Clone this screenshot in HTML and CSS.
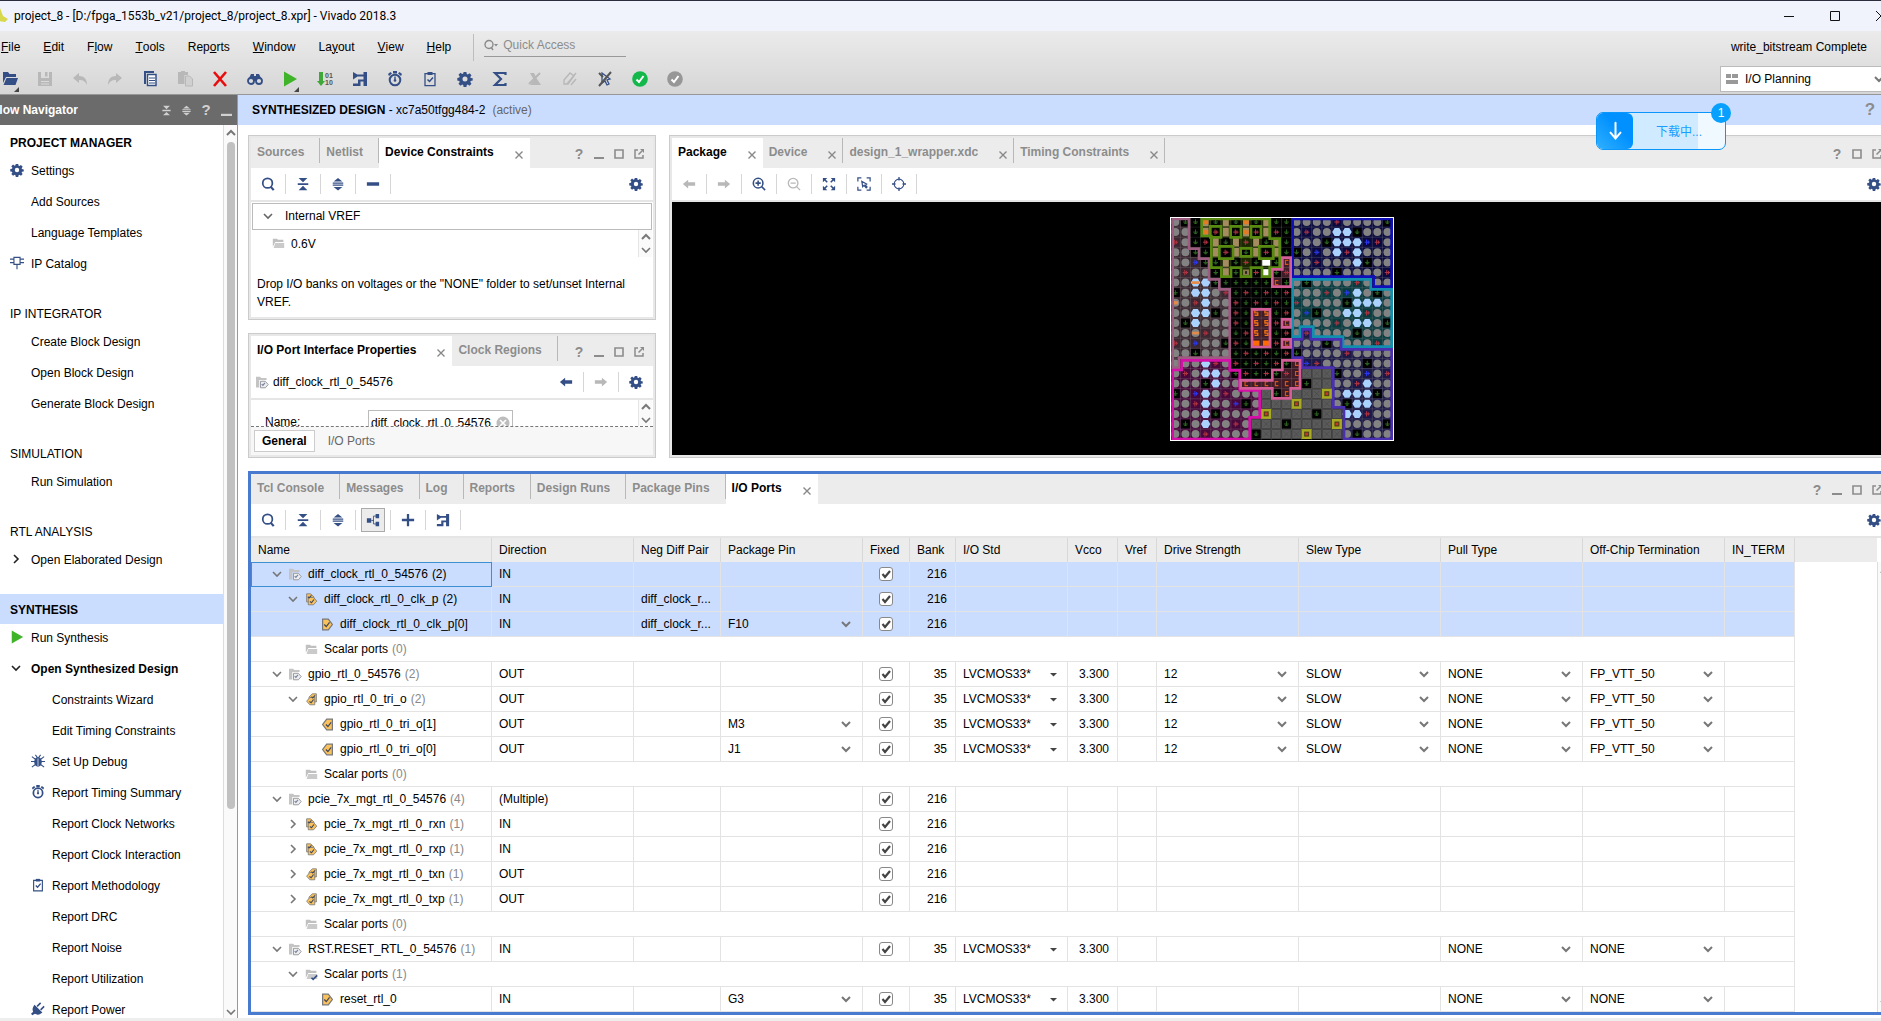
FILE: index.html
```html
<!DOCTYPE html>
<html lang="en">
<head>
  <meta charset="UTF-8">
  <meta name="viewport" content="width=device-width, initial-scale=1.0">
  <title>project_8 - Vivado 2018.3</title>
  <link rel="stylesheet" href="styles.css">
</head>
<body>
  <svg class="sprite" aria-hidden="true">
    <symbol id="gear" viewBox="0 0 16 16"><path fill="currentColor" fill-rule="evenodd" d="M6.6 1h2.8l.4 2 1 .4 1.7-1.2 2 2-1.2 1.7.4 1 2 .4v2.3l-2 .4-.4 1 1.2 1.7-2 2-1.7-1.2-1 .4-.4 2H6.600l-.4-2-1-.4-1.700 1.200-2-2 1.200-1.700-.4-1-2-.4V6.900l2-.4.4-1-1.200-1.700 2-2 1.700 1.200 1-.4zM8 5.500a2.500 2.500 0 1 0 0 5 2.500 2.500 0 0 0 0-5z"/></symbol>
    <symbol id="search" viewBox="0 0 16 16"><circle cx="7.500" cy="7" r="5.500" fill="none" stroke="currentColor" stroke-width="2"/><path d="M11 11l3.500 4" stroke="currentColor" stroke-width="2.600"/></symbol>
    <symbol id="collapse" viewBox="0 0 16 16"><path fill="currentColor" d="M3 1h10L8 6zM2 7h12v2H2zM3 15h10l-5-5z"/></symbol>
    <symbol id="expand" viewBox="0 0 16 16"><path fill="currentColor" d="M3 5h10L8 1zM2 6.300h12v1.400H2zM2 8.700h12v1.400H2zM3 11.400h10L8 15.400z"/></symbol>
    <symbol id="minus" viewBox="0 0 16 16"><path fill="currentColor" d="M1 6h14v4H1z"/></symbol>
    <symbol id="plus" viewBox="0 0 16 16"><path fill="currentColor" d="M6.700 1h2.600v5.700H15v2.600H9.300V15H6.700V9.300H1V6.700h5.700z"/></symbol>
    <symbol id="tree" viewBox="0 0 16 16"><path fill="currentColor" d="M1 6h5v5H1zM11 1h4v5h-4zM11 10h4v5h-4z"/><path fill="none" stroke="currentColor" d="M6 8.500h3M12 3.500H8.500v9H12"/></symbol>
    <symbol id="schematic" viewBox="0 0 16 16"><path fill="currentColor" d="M1 1l6 3.500L1 8.500zM11.500 1H15v14h-3.500zM5 3.500h7v2H5zM1 12.500h5V8.500h6v2H8.500V15H1z"/></symbol>
    <symbol id="clock" viewBox="0 0 16 16"><circle cx="8" cy="9" r="5.300" fill="none" stroke="currentColor" stroke-width="2"/><path fill="currentColor" d="M6 0h4v2.500H6zM1 3l2.500-2L5 2.500 2 5zM15 3l-2.500-2L11 2.500 14 5zM7.300 5.500h1.400v4H7.300z"/><circle cx="8" cy="9.500" r="1.300" fill="currentColor"/></symbol>
    <symbol id="clipboard" viewBox="0 0 16 16"><path fill="none" stroke="currentColor" stroke-width="1.300" d="M3 2.700h10v12H3z"/><path fill="none" stroke="currentColor" stroke-width="1.500" d="M5.500 8.500l2 2 3.500-4"/><path fill="currentColor" d="M5.500 1h5v3h-5z"/></symbol>
    <symbol id="play" viewBox="0 0 16 16"><path fill="#3fb428" d="M2 .500l13 7.500-13 7.500z"/></symbol>
    <symbol id="chip" viewBox="0 0 16 16"><path fill="none" stroke="currentColor" stroke-width="1.300" d="M4.500 1.500h7v8h-7zM0 3.500h4.500M0 7.500h4.500M11.500 3.500H16M11.500 7.500H16M8 9.500V15"/></symbol>
    <symbol id="bug" viewBox="0 0 16 16"><ellipse cx="8" cy="9" rx="4.300" ry="5.500" fill="currentColor"/><path fill="none" stroke="currentColor" stroke-width="1.200" d="M1 3l4 3M15 3l-4 3M0 8.500h16M1 15l4-3M15 15l-4-3M5 1l2 2.500M11 1L9 3.500"/><path stroke="#fff" stroke-width=".8" d="M8 5v9"/></symbol>
    <symbol id="power" viewBox="0 0 16 16"><path fill="currentColor" d="M4 3l9 9-2 1.500c-2.500 1.500-5 1-6.500 0L1.500 15 0 13.500 2.500 11C1.300 9 1.500 6 4 3z"/><path stroke="currentColor" stroke-width="1.800" d="M7 5l4-4M11 9l4-4"/></symbol>
    <symbol id="open" viewBox="0 0 16 16"><path fill="currentColor" d="M1 1h5l1.500 2H14v3H4L1 12z"/><path fill="currentColor" d="M4.500 7H16l-2.500 7H1.500z"/></symbol>
    <symbol id="folder" viewBox="0 0 16 16"><path fill="#c0c0c0" d="M1 2h5l1.500 1.500H14V6H4L1 12z"/><path fill="#cacaca" d="M4 7.500h11v6H2z"/></symbol>
    <symbol id="folder-port" viewBox="0 0 16 16"><path fill="#c4c4c4" d="M0 1h5l1.500 1.500H13V5H4v9H0z"/><path fill="#eee" stroke="#98989e" stroke-width="1.200" d="M5.500 6.500h6l3.500 4-3.500 4h-6z"/><path fill="none" stroke="#7482a4" stroke-width="1.500" d="M7 10l1.500 1.500L11 8.500"/></symbol>
    <symbol id="folder-check" viewBox="0 0 16 16"><path fill="#c0c0c0" d="M1 2h5l1.500 1.500H14V6H4L1 12z"/><path fill="#cacaca" d="M4 7.500h11v6H2z"/><path fill="none" stroke="#344f86" stroke-width="2" d="M8 12l2 2 5-5"/></symbol>
    <symbol id="port-in" viewBox="0 0 16 16"><path fill="#fac25c" stroke="#777" stroke-width="1.500" d="M2 1.500h7l5 6.500-5 6.500H2z"/><path fill="none" stroke="#444a5c" stroke-width="1.600" d="M4 8l2.500 2.500 4-5"/></symbol>
    <symbol id="port-out" viewBox="0 0 16 16"><path fill="#fac25c" stroke="#777" stroke-width="1.500" d="M14 1.500H7L2 8l5 6.500h7z"/><path fill="none" stroke="#444a5c" stroke-width="1.600" d="M6 8l2.500 2.500 4-5"/></symbol>
    <symbol id="bus-in" viewBox="0 0 16 16"><path fill="#fac25c" stroke="#777" d="M2 1h5l4 4v6H2z"/><path fill="#fac25c" stroke="#777" d="M4 5.500h6.500l4 4.500-4 4.500H4z"/><path fill="none" stroke="#444a5c" stroke-width="1.500" d="M3.500 4.500L5 6l3-3M6 10.500L8 12l3-4"/></symbol>
    <symbol id="bus-out" viewBox="0 0 16 16"><path fill="#fac25c" stroke="#777" d="M14 1H9L5 5v6h9z"/><path fill="#fac25c" stroke="#777" d="M12 5.500H6L2 10l4 4.500h6z"/><path fill="none" stroke="#444a5c" stroke-width="1.500" d="M8 4.500L9.500 6l3-3M5.500 10.500L7.500 12l3-4"/></symbol>
    <symbol id="down" viewBox="0 0 10 10"><path fill="none" stroke="currentColor" stroke-width="1.600" d="M1 3l4 4 4-4"/></symbol>
    <symbol id="up" viewBox="0 0 10 10"><path fill="none" stroke="currentColor" stroke-width="2" d="M1 7l4-4 4 4"/></symbol>
    <symbol id="right" viewBox="0 0 10 10"><path fill="none" stroke="currentColor" stroke-width="1.600" d="M3 1l4 4-4 4"/></symbol>
    <symbol id="close" viewBox="0 0 8 8"><path stroke="currentColor" stroke-width="1.400" d="M.5.5l7 7M7.500.5l-7 7"/></symbol>
    <symbol id="min" viewBox="0 0 10 10"><path fill="currentColor" d="M0 8h10v2H0z"/></symbol>
    <symbol id="max" viewBox="0 0 10 10"><path fill="none" stroke="currentColor" stroke-width="1.600" d="M1 1h8v8H1z"/></symbol>
    <symbol id="float" viewBox="0 0 10 10"><path fill="none" stroke="currentColor" stroke-width="1.500" d="M4 1H1v8h8V6M4.500 5.500L8 2"/><path fill="currentColor" d="M6 0h4v4z"/></symbol>
    <symbol id="back" viewBox="0 0 16 16"><path fill="currentColor" d="M1 8l6-5v3h8v4H7v3z"/></symbol>
    <symbol id="forward" viewBox="0 0 16 16"><path fill="currentColor" d="M15 8L9 3v3H1v4h8v3z"/></symbol>
    <symbol id="zoom-in" viewBox="0 0 16 16"><circle cx="7" cy="7" r="5.500" fill="none" stroke="currentColor" stroke-width="1.800"/><path stroke="currentColor" stroke-width="1.800" d="M4 7h6M7 4v6M11 11l4 4"/></symbol>
    <symbol id="zoom-out" viewBox="0 0 16 16"><circle cx="7" cy="7" r="5.500" fill="none" stroke="currentColor" stroke-width="1.500"/><path stroke="currentColor" stroke-width="1.500" d="M4 7h6M11 11l4 4"/></symbol>
    <symbol id="fit" viewBox="0 0 16 16"><path fill="currentColor" d="M1 1h5L1 6zM15 1h-5l5 5zM1 15h5l-5-5zM15 15h-5l5-5z"/><path stroke="currentColor" stroke-width="1.800" d="M2 2l4 4M14 2l-4 4M2 14l4-4M14 14l-4-4"/></symbol>
    <symbol id="fit-selection" viewBox="0 0 16 16"><path fill="none" stroke="currentColor" stroke-width="1.400" d="M1 5V1h4M11 1h4v4M1 11v4h4M11 15h4v-4M5.500 5l1 6 1.500-1.500 2.500 3 1-1L9.500 9 11 8z"/></symbol>
    <symbol id="target" viewBox="0 0 16 16"><circle cx="8" cy="8" r="5.500" fill="none" stroke="currentColor" stroke-width="1.300"/><path stroke="currentColor" stroke-width="1.500" d="M8 0v4M8 12v4M0 8h4M12 8h4"/></symbol>
    <symbol id="save" viewBox="0 0 16 16"><path fill="currentColor" fill-rule="evenodd" d="M1 1h3v6h8V1h3v14H1zM8 1h2.500v4.500H8zM4 10h8v1H4zM4 12.500h8v1H4z"/></symbol>
    <symbol id="undo" viewBox="0 0 16 16"><path fill="currentColor" d="M1 7l6-5v3c5 0 8 3 8 9-2-4-4-5-8-5v3z"/></symbol>
    <symbol id="redo" viewBox="0 0 16 16"><path fill="currentColor" d="M15 7L9 2v3c-5 0-8 3-8 9 2-4 4-5 8-5v3z"/></symbol>
    <symbol id="copy" viewBox="0 0 16 16"><path fill="currentColor" d="M2 0h10v2H4v11H2z"/><path fill="#fff" stroke="currentColor" stroke-width="1.500" d="M5.500 3.500h8.500v11H5.500z"/><path stroke="currentColor" stroke-width="1.200" d="M7 7h6M7 9.500h6M7 12h6"/></symbol>
    <symbol id="paste" viewBox="0 0 16 16"><path fill="currentColor" d="M1 1h3V0h4v1h3v3H7.500v9H1z"/><path fill="#d0d0d0" stroke="currentColor" d="M8.500 5h4l3 3v7h-7z"/></symbol>
    <symbol id="delete" viewBox="0 0 16 16"><path stroke="#e80c0c" stroke-width="2.600" d="M2 1l12 14M14 1L2 15"/></symbol>
    <symbol id="find" viewBox="0 0 16 16"><path fill="currentColor" d="M4 3h3v2h2V3h3l3.500 7H.5z"/><circle cx="4" cy="10" r="3" fill="#ddd" stroke="currentColor" stroke-width="1.800"/><circle cx="12" cy="10" r="3" fill="#ddd" stroke="currentColor" stroke-width="1.800"/></symbol>
    <symbol id="sigma" viewBox="0 0 16 16"><path fill="none" stroke="currentColor" stroke-width="2.200" d="M13.500 4V2H3l6 6-6 6h10.500v-2"/></symbol>
    <symbol id="no-mark" viewBox="0 0 16 16"><path fill="currentColor" d="M3 2h4l3 6 4 6H3l4-5z"/><path stroke="currentColor" stroke-width="2.200" d="M2 13L13 2"/></symbol>
    <symbol id="no-link" viewBox="0 0 16 16"><path fill="none" stroke="currentColor" stroke-width="1.400" d="M2 9l6-7 4 3-6 8H2zM5 13L14 2M9 14l5-6"/></symbol>
    <symbol id="no-select" viewBox="0 0 16 16"><path fill="none" stroke="#344f86" stroke-width="1.300" d="M5 2v10l3-2 2 4 2-1-2-4 3-1z"/><path stroke="#555" stroke-width="2" d="M2 15L14 1M2 2l4 4"/></symbol>
    <symbol id="ok" viewBox="0 0 16 16"><circle cx="8" cy="8" r="7.800" fill="currentColor"/><path fill="none" stroke="#fff" stroke-width="2" d="M4.500 8.500L7 11l4.500-6"/></symbol>
    <symbol id="layout" viewBox="0 0 12 12"><path fill="#999" d="M0 1h5v4H0zM6 1h6v4H6zM0 7h12v4H0z"/></symbol>
    <symbol id="clear" viewBox="0 0 14 14"><circle cx="7" cy="7" r="6.500" fill="#bdbdbd"/><path stroke="#fff" stroke-width="1.600" d="M4 4l6 6M10 4l-6 6"/></symbol>
  </svg>

  <div class="window">
    <header class="titlebar">
      <svg class="logo" viewBox="0 0 16 16"><path fill="#d8d84c" d="M8 0l3 8 5 3-3 3-6-1z"/></svg>
      <span class="title">project_8 - [D:/fpga_1553b_v21/project_8/project_8.xpr] - Vivado 2018.3</span>
      <div class="caption">
        <button aria-label="Minimize"><svg viewBox="0 0 12 12"><path stroke="#111" d="M1 6.500h10"/></svg></button>
        <button aria-label="Maximize"><svg viewBox="0 0 12 12"><path fill="none" stroke="#111" d="M1.500 1.500h9v9h-9z"/></svg></button>
        <button aria-label="Close"><svg viewBox="0 0 12 12"><path stroke="#111" d="M1 1l10 10M11 1L1 11"/></svg></button>
      </div>
    </header>

    <div class="chrome">
      <div class="menubar">
        <nav class="menu">
          <button><u>F</u>ile</button>
          <button><u>E</u>dit</button>
          <button>F<u>l</u>ow</button>
          <button><u>T</u>ools</button>
          <button>Rep<u>o</u>rts</button>
          <button><u>W</u>indow</button>
          <button>La<u>y</u>out</button>
          <button><u>V</u>iew</button>
          <button><u>H</u>elp</button>
        </nav>
        <label class="quick">
          <svg viewBox="0 0 14 12"><circle cx="5" cy="5.500" r="4" fill="none" stroke="#8a8a8a" stroke-width="1.400"/><path stroke="#8a8a8a" stroke-width="1.400" d="M7 8l2 3"/><path fill="#8a8a8a" d="M10 5h4l-2 2.500z"/></svg>
          <input type="text" placeholder="Quick Access" aria-label="Quick Access">
        </label>
        <span class="status">write_bitstream Complete</span>
      </div>
      <div class="mainbar">
        <button class="drop" aria-label="Open"><svg><use href="#open"/></svg></button>
        <button class="off" aria-label="Save"><svg><use href="#save"/></svg></button>
        <button class="off" aria-label="Undo"><svg><use href="#undo"/></svg></button>
        <button class="off" aria-label="Redo"><svg><use href="#redo"/></svg></button>
        <button aria-label="Copy"><svg><use href="#copy"/></svg></button>
        <button class="off" aria-label="Paste"><svg><use href="#paste"/></svg></button>
        <button aria-label="Delete"><svg><use href="#delete"/></svg></button>
        <button aria-label="Find"><svg><use href="#find"/></svg></button>
        <button class="drop" aria-label="Run"><svg><use href="#play"/></svg></button>
        <button aria-label="Generate bitstream"><svg viewBox="0 0 16 16"><path fill="#3fa83a" d="M2 1h4v9h2l-4 5-4-5h2z"/><text class="bits" x="8" y="7">01</text><text class="bits" x="8" y="14">10</text></svg></button>
        <button aria-label="Schematic"><svg><use href="#schematic"/></svg></button>
        <button aria-label="Report timing"><svg><use href="#clock"/></svg></button>
        <button aria-label="Methodology"><svg><use href="#clipboard"/></svg></button>
        <button aria-label="Settings"><svg><use href="#gear"/></svg></button>
        <button aria-label="Summary"><svg><use href="#sigma"/></svg></button>
        <button class="off" aria-label="Unmark"><svg><use href="#no-mark"/></svg></button>
        <button class="off" aria-label="Unhighlight"><svg><use href="#no-link"/></svg></button>
        <button aria-label="Unselect"><svg><use href="#no-select"/></svg></button>
        <button class="green" aria-label="Validate"><svg><use href="#ok"/></svg></button>
        <button class="grey" aria-label="Check"><svg><use href="#ok"/></svg></button>
        <div class="layout-pick">
          <svg><use href="#layout"/></svg>
          <select aria-label="Layout"><option>I/O Planning</option></select>
        </div>
      </div>
    </div>

    <div class="workspace">
      <aside class="navigator">
        <div class="nav-head">
          <span>Flow Navigator</span>
          <button aria-label="Collapse all"><svg><use href="#collapse"/></svg></button>
          <button aria-label="Expand all"><svg><use href="#expand"/></svg></button>
          <button aria-label="Help">?</button>
          <button aria-label="Minimize"><svg><use href="#min"/></svg></button>
        </div>
        <div class="nav-body">
          <nav class="nav-list">
            <h3 class="strong">PROJECT MANAGER</h3>
            <a href="#"><svg><use href="#gear"/></svg>Settings</a>
            <a href="#">Add Sources</a>
            <a href="#">Language Templates</a>
            <a href="#"><svg><use href="#chip"/></svg>IP Catalog</a>
            <h3>IP INTEGRATOR</h3>
            <a href="#">Create Block Design</a>
            <a href="#">Open Block Design</a>
            <a href="#">Generate Block Design</a>
            <h3>SIMULATION</h3>
            <a href="#">Run Simulation</a>
            <h3>RTL ANALYSIS</h3>
            <a href="#"><svg class="arrow"><use href="#right"/></svg>Open Elaborated Design</a>
            <h3 class="strong current">SYNTHESIS</h3>
            <a href="#"><svg><use href="#play"/></svg>Run Synthesis</a>
            <a href="#" class="strong"><svg class="arrow"><use href="#down"/></svg>Open Synthesized Design</a>
            <a href="#" class="sub">Constraints Wizard</a>
            <a href="#" class="sub">Edit Timing Constraints</a>
            <a href="#" class="sub"><svg><use href="#bug"/></svg>Set Up Debug</a>
            <a href="#" class="sub"><svg><use href="#clock"/></svg>Report Timing Summary</a>
            <a href="#" class="sub">Report Clock Networks</a>
            <a href="#" class="sub">Report Clock Interaction</a>
            <a href="#" class="sub"><svg><use href="#clipboard"/></svg>Report Methodology</a>
            <a href="#" class="sub">Report DRC</a>
            <a href="#" class="sub">Report Noise</a>
            <a href="#" class="sub">Report Utilization</a>
            <a href="#" class="sub"><svg><use href="#power"/></svg>Report Power</a>
          </nav>
          <div class="scroll">
            <svg><use href="#up"/></svg>
            <div class="thumb"></div>
            <svg class="end"><use href="#down"/></svg>
          </div>
        </div>
      </aside>

      <main class="main">
        <div class="design-head">
          <b>SYNTHESIZED DESIGN</b>&nbsp;- xc7a50tfgg484-2 <span class="muted">(active)</span>
          <button aria-label="Help">?</button>
        </div>

        <div class="panels">
          <div class="upper">
            <div class="left-col">
              <section class="panel">
                <div class="tabs">
                  <button class="tab">Sources</button>
                  <button class="tab">Netlist</button>
                  <button class="tab active">Device Constraints <svg><use href="#close"/></svg></button>
                  <div class="tools">
                    <button aria-label="Help">?</button>
                    <button aria-label="Minimize"><svg><use href="#min"/></svg></button>
                    <button aria-label="Maximize"><svg><use href="#max"/></svg></button>
                    <button aria-label="Float"><svg><use href="#float"/></svg></button>
                  </div>
                </div>
                <div class="toolbar">
                  <button aria-label="Search"><svg><use href="#search"/></svg></button>
                  <button aria-label="Collapse all"><svg><use href="#collapse"/></svg></button>
                  <button aria-label="Expand all"><svg><use href="#expand"/></svg></button>
                  <button aria-label="Remove"><svg><use href="#minus"/></svg></button>
                  <button class="last" aria-label="Settings"><svg><use href="#gear"/></svg></button>
                </div>
                <div class="vref">
                  <button class="vref-head"><svg><use href="#down"/></svg>Internal VREF</button>
                  <div class="vref-row">
                    <svg><use href="#folder"/></svg><span>0.6V</span>
                    <div class="mini-scroll"><svg><use href="#up"/></svg><svg><use href="#down"/></svg></div>
                  </div>
                  <p class="hint">Drop I/O banks on voltages or the "NONE" folder to set/unset Internal VREF.</p>
                </div>
              </section>

              <section class="panel props">
                <div class="tabs">
                  <button class="tab active">I/O Port Interface Properties <svg><use href="#close"/></svg></button>
                  <button class="tab">Clock Regions</button>
                  <div class="tools">
                    <button aria-label="Help">?</button>
                    <button aria-label="Minimize"><svg><use href="#min"/></svg></button>
                    <button aria-label="Maximize"><svg><use href="#max"/></svg></button>
                    <button aria-label="Float"><svg><use href="#float"/></svg></button>
                  </div>
                </div>
                <div class="toolbar">
                  <span class="object"><svg><use href="#folder-port"/></svg>diff_clock_rtl_0_54576</span>
                  <button class="last" aria-label="Back"><svg><use href="#back"/></svg></button>
                  <button class="off" aria-label="Forward"><svg><use href="#forward"/></svg></button>
                  <button class="plain" aria-label="Settings"><svg><use href="#gear"/></svg></button>
                </div>
                <div class="props-body">
                  <label for="portName">Name:</label>
                  <div class="field"><input type="text" id="portName" value="diff_clock_rtl_0_54576"><svg><use href="#clear"/></svg></div>
                  <div class="mini-scroll"><svg><use href="#up"/></svg><svg><use href="#down"/></svg></div>
                </div>
                <div class="props-tabs">
                  <button class="on">General</button>
                  <button>I/O Ports</button>
                </div>
              </section>
            </div>

            <section class="panel device">
              <div class="tabs">
                <button class="tab active">Package <svg><use href="#close"/></svg></button>
                <button class="tab">Device <svg><use href="#close"/></svg></button>
                <button class="tab">design_1_wrapper.xdc <svg><use href="#close"/></svg></button>
                <button class="tab">Timing Constraints <svg><use href="#close"/></svg></button>
                <div class="tools">
                  <button aria-label="Help">?</button>
                  <button aria-label="Maximize"><svg><use href="#max"/></svg></button>
                  <button aria-label="Float"><svg><use href="#float"/></svg></button>
                </div>
              </div>
              <div class="toolbar">
                <button class="off" aria-label="Back"><svg><use href="#back"/></svg></button>
                <button class="off" aria-label="Forward"><svg><use href="#forward"/></svg></button>
                <button aria-label="Zoom in"><svg><use href="#zoom-in"/></svg></button>
                <button class="off" aria-label="Zoom out"><svg><use href="#zoom-out"/></svg></button>
                <button aria-label="Zoom fit"><svg><use href="#fit"/></svg></button>
                <button aria-label="Fit selection"><svg><use href="#fit-selection"/></svg></button>
                <button aria-label="Autofit"><svg><use href="#target"/></svg></button>
                <button class="last" aria-label="Settings"><svg><use href="#gear"/></svg></button>
              </div>
              <div class="canvas"><svg id="package" viewBox="60 36 672 672"></svg></div>
            </section>
          </div>

          <section class="panel focus">
            <div class="tabs">
              <button class="tab">Tcl Console</button>
              <button class="tab">Messages</button>
              <button class="tab">Log</button>
              <button class="tab">Reports</button>
              <button class="tab">Design Runs</button>
              <button class="tab">Package Pins</button>
              <button class="tab active">I/O Ports <svg><use href="#close"/></svg></button>
              <div class="tools">
                <button aria-label="Help">?</button>
                <button aria-label="Minimize"><svg><use href="#min"/></svg></button>
                <button aria-label="Maximize"><svg><use href="#max"/></svg></button>
                <button aria-label="Float"><svg><use href="#float"/></svg></button>
              </div>
            </div>
            <div class="toolbar">
              <button aria-label="Search"><svg><use href="#search"/></svg></button>
              <button aria-label="Collapse all"><svg><use href="#collapse"/></svg></button>
              <button aria-label="Expand all"><svg><use href="#expand"/></svg></button>
              <button class="pressed" aria-label="Group by interface"><span><svg><use href="#tree"/></svg></span></button>
              <button aria-label="Add"><svg><use href="#plus"/></svg></button>
              <button aria-label="Schematic"><svg><use href="#schematic"/></svg></button>
              <button class="last" aria-label="Settings"><svg><use href="#gear"/></svg></button>
            </div>
            <div class="grid">
              <table class="ports">
                <colgroup>
                  <col class="w-name"><col class="w-wide"><col class="w-neg"><col class="w-wide"><col class="w-fixed">
                  <col class="w-bank"><col class="w-std"><col class="w-vcco"><col class="w-vref"><col class="w-wide">
                  <col class="w-wide"><col class="w-wide"><col class="w-wide"><col class="w-term"><col>
                </colgroup>
                <thead>
                  <tr>
                    <th>Name</th><th>Direction</th><th>Neg Diff Pair</th><th>Package Pin</th><th>Fixed</th>
                    <th>Bank</th><th>I/O Std</th><th>Vcco</th><th>Vref</th><th>Drive Strength</th>
                    <th>Slew Type</th><th>Pull Type</th><th>Off-Chip Termination</th><th>IN_TERM</th><th></th>
                  </tr>
                </thead>
                <tbody id="ports"></tbody>
              </table>
              <div class="grid-scroll"><svg><use href="#up"/></svg><div class="thumb"></div><svg><use href="#down"/></svg></div>
            </div>
          </section>
        </div>
      </main>
    </div>
    <div class="statusbar"></div>
  </div>

  <div class="download">
    <span class="download-icon"><svg viewBox="0 0 20 24"><path fill="none" stroke="#fff" stroke-width="2.400" stroke-linecap="round" d="M10 2v18M4 14l6 7 6-7"/></svg></span>
    <span class="download-text">下载中...</span>
    <span class="badge">1</span>
  </div>

  <script src="script.js"></script>
</body>
</html>
```
FILE: styles.css
```css
:root {
  --blue: #344f86;
  --select: #cbddfe;
  --bar: #ececec;
  --line: #e3e3e3;
  --grey: #8c8c8c;
}

* {
  box-sizing: border-box;
}

body {
  margin: 0;
  height: 100vh;
  overflow: hidden;
  background-color: #fff;
  color: #000;
  font-family: "Liberation Sans", "Noto Sans CJK SC", Arial, sans-serif;
  font-size: 12px;
  line-height: 18px;
}

button, input, select {
  font: inherit;
  color: inherit;
  margin: 0;
  padding: 0;
  border: none;
  background: none;
  border-radius: 0;
  outline: none;
}

button {
  display: flex;
  align-items: center;
  justify-content: center;
  white-space: nowrap;
}

select {
  appearance: none;
  background: url("data:image/svg+xml,%3Csvg xmlns='http://www.w3.org/2000/svg' width='10' height='8'%3E%3Cpath d='M1 2l4 4 4-4' fill='none' stroke='%23777' stroke-width='2'/%3E%3C/svg%3E") no-repeat right 11px center;
}

svg {
  display: block;
  flex: none;
  width: 16px;
  height: 16px;
}

.sprite {
  position: absolute;
  width: 0;
  height: 0;
}

/* the window is a bit wider than the screen on both sides */
.window {
  display: flex;
  flex-direction: column;
  height: 100vh;
  width: calc(100% + 31px);
  margin-left: -8px;
}

/* title bar */
.titlebar {
  display: flex;
  align-items: center;
  height: 31px;
  flex: none;
  border-top: 1px solid #2c2c3c;
  background-color: #f0f3fb;
}

.title {
  margin-left: 6px;
  font-family: Roboto, "Open Sans", sans-serif;
  font-size: 12px;
}

.caption {
  display: flex;
  margin-left: auto;
}

.caption button {
  width: 46px;
  height: 29px;
}

.caption svg {
  width: 12px;
  height: 12px;
}

/* menu and main toolbar */
.chrome {
  flex: none;
  border-bottom: 1px solid #979797;
  background: linear-gradient(#ebebeb, #d6d6d6);
}

.menubar {
  display: flex;
  align-items: center;
  height: 32px;
  padding: 0 37px 0 9px;
}

.menu {
  display: flex;
  gap: 23px;
  padding-right: 22px;
  border-right: 1px solid #bdbdbd;
  line-height: 27px;
}

.quick {
  display: flex;
  align-items: center;
  gap: 5px;
  width: 142px;
  height: 24px;
  margin: 0 0 4px 10px;
  border-bottom: 1px solid #999;
}

.quick svg {
  width: 14px;
  height: 12px;
}

.quick input {
  width: 100%;
}

.quick input::placeholder {
  color: var(--grey);
  opacity: 1;
}

.status {
  margin-left: auto;
}

.mainbar {
  display: flex;
  align-items: center;
  height: 31px;
  padding-right: 12px;
}

.mainbar button {
  position: relative;
  width: 35px;
  height: 24px;
  color: var(--blue);
}

.mainbar .drop::after {
  content: "";
  position: absolute;
  right: 8px;
  bottom: -1px;
  border-left: 5px solid transparent;
  border-bottom: 5px solid #444;
}

.bits {
  fill: #555;
  font-size: 7px;
  font-weight: bold;
}

.mainbar .off, .toolbar .off {
  color: #b8b8b8;
}

.mainbar .green {
  color: #14b84a;
}

.mainbar .grey {
  color: #979797;
}

.layout-pick {
  display: flex;
  align-items: center;
  gap: 7px;
  width: 172px;
  height: 26px;
  margin-left: auto;
  padding-left: 5px;
  border: 1px solid #bbb;
  background-color: #fff;
}

.layout-pick svg {
  width: 12px;
  height: 12px;
}

.layout-pick select {
  flex: 1;
  background-position: right 7px center;
}

/* flow navigator */
.workspace {
  display: flex;
  flex: 1;
  min-height: 0;
}

.navigator {
  display: flex;
  flex-direction: column;
  flex: 0 0 246px;
  border-right: 1px solid #999;
}

.nav-head {
  display: flex;
  align-items: center;
  height: 30px;
  flex: none;
  padding-right: 1px;
  background-color: #6b6b6b;
  color: #fff;
  font-weight: bold;
}

.nav-head span {
  flex: 1;
}

.nav-head button {
  width: 20px;
  height: 20px;
  color: #d0d0d0;
  font-size: 15px;
}

.nav-head svg {
  width: 11px;
  height: 11px;
}

.nav-body {
  display: flex;
  flex: 1;
  min-height: 0;
}

.nav-list {
  flex: 1;
  padding-top: 2px;
  overflow: hidden;
}

.nav-list h3 {
  height: 30px;
  margin: 17px 0 0;
  padding: 3px 0 0 18px;
  font-size: 12px;
  line-height: 27px;
  font-weight: normal;
}

.nav-list h3:first-child {
  margin-top: 0;
}

.nav-list .strong {
  font-weight: bold;
}

.nav-list .current {
  background-color: var(--select);
}

.nav-list a {
  display: block;
  height: 31px;
  padding-left: 39px;
  color: #000;
  line-height: 29px;
  text-decoration: none;
}

.nav-list .sub {
  padding-left: 60px;
}

.nav-list svg {
  float: left;
  width: 14px;
  height: 14px;
  margin: 6px 7px 0 -21px;
  color: var(--blue);
}

.nav-list .arrow {
  width: 10px;
  height: 10px;
  margin: 8px 10px 0 -20px;
  color: #222;
}

.scroll {
  display: flex;
  flex-direction: column;
  align-items: center;
  gap: 4px;
  width: 14px;
  padding: 3px 0 1px;
  border-left: 1px solid #ddd;
  background-color: #fafafa;
  color: #777;
}

.scroll svg, .mini-scroll svg, .grid-scroll svg {
  width: 10px;
  height: 10px;
}

.scroll .end {
  margin-top: auto;
}

.scroll .thumb {
  width: 8px;
  height: 75%;
  border-radius: 4px;
  background-color: #c1c1c1;
}

/* design area */
.main {
  display: flex;
  flex-direction: column;
  flex: 1;
  min-width: 0;
}

.design-head {
  display: flex;
  align-items: center;
  height: 30px;
  flex: none;
  padding: 0 24px 0 14px;
  background-color: var(--select);
}

.design-head .muted {
  margin-left: 7px;
  color: #666;
}

.design-head button {
  width: 20px;
  margin-left: auto;
  color: var(--grey);
  font-size: 17px;
  font-weight: bold;
}

.panels {
  display: flex;
  flex-direction: column;
  flex: 1;
  gap: 13px;
  min-height: 0;
  padding: 10px 10px 3px;
}

.upper {
  display: flex;
  flex: 1;
  gap: 13px;
  min-height: 0;
}

.left-col {
  display: flex;
  flex-direction: column;
  flex: 0 0 408px;
  gap: 13px;
}

.panel {
  display: flex;
  flex-direction: column;
  border: 1px solid #cbcbcb;
  padding: 2px;
  background-color: #e8e8e8;
}

.panel.focus {
  border: 3px solid #487bd0;
  padding: 0;
}

.panel.device {
  flex: 1;
  min-width: 0;
}

.tabs {
  display: flex;
  height: 30px;
  flex: none;
  background-color: var(--bar);
}

.tab {
  position: relative;
  padding: 0 16px 2px 6px;
  color: var(--grey);
  font-weight: bold;
}

.tab::after {
  content: "";
  position: absolute;
  top: 0;
  right: 0;
  width: 1px;
  height: 25px;
  background-color: #b8b8b8;
}

.tab.active {
  background-color: #fff;
  color: #000;
}

.tab.active::after {
  display: none;
}

.tab svg {
  width: 8px;
  height: 8px;
  margin: 5px -9px 0 21px;
  color: #888;
}

.tools {
  display: flex;
  align-items: center;
  margin-left: auto;
  padding: 2px 4px 0 0;
}

.tools button {
  width: 20px;
  height: 20px;
  color: var(--grey);
  font-size: 14px;
  font-weight: bold;
}

.tools svg {
  width: 10px;
  height: 10px;
}

.toolbar {
  display: flex;
  align-items: center;
  height: 34px;
  flex: none;
  border-bottom: 2px solid #e5e5e5;
  background-color: #fff;
}

.toolbar button {
  width: 35px;
  height: 20px;
  border-right: 1px solid #d6d6d6;
  color: var(--blue);
}

.toolbar svg {
  width: 14px;
  height: 14px;
}

.toolbar .last {
  margin-left: auto;
}

.toolbar .last:last-child, .toolbar .plain {
  width: 34px;
  border-right: none;
}

.toolbar .pressed span {
  display: flex;
  align-items: center;
  justify-content: center;
  flex: none;
  width: 24px;
  height: 24px;
  border: 1px solid #aaa;
  background-color: var(--bar);
}

.object {
  display: flex;
  align-items: center;
  gap: 4px;
  padding-left: 5px;
}

.object svg {
  width: 13px;
  height: 13px;
}

/* device constraints */
.vref {
  flex: 1;
  padding: 1px 1px 0;
  background-color: #fff;
}

.vref-head {
  justify-content: flex-start;
  gap: 12px;
  width: 100%;
  height: 27px;
  padding: 0 0 1px 10px;
  border: 1px solid #bbb;
}

.vref-head svg {
  width: 10px;
  height: 10px;
  color: #666;
}

.vref-row {
  display: flex;
  align-items: center;
  gap: 6px;
  height: 27px;
  padding-left: 20px;
}

.vref-row > svg {
  width: 13px;
  height: 13px;
}

.mini-scroll {
  display: flex;
  flex-direction: column;
  align-items: center;
  justify-content: space-around;
  align-self: stretch;
  width: 14px;
  margin-left: auto;
  border-left: 1px solid #e5e5e5;
  background-color: #fafafa;
  color: #777;
}

.hint {
  margin: 18px 0 6px;
  padding: 0 4px 0 5px;
}

/* port properties */
.props {
  flex: 1;
  min-height: 0;
}

.props-body {
  display: flex;
  flex: 1;
  align-items: flex-start;
  min-height: 0;
  padding: 0 1px 0 14px;
  overflow: hidden;
  border-bottom: 1px dashed #777;
  background-color: #fff;
}

.props-body label {
  width: 103px;
  padding-top: 13px;
}

.field {
  display: flex;
  align-items: center;
  width: 145px;
  height: 25px;
  margin-top: 10px;
  padding: 0 2px;
  border: 1px solid #bbb;
}

.field input {
  flex: 1;
  min-width: 0;
}

.field svg {
  width: 14px;
  height: 14px;
}

.props-tabs {
  display: flex;
  gap: 6px;
  height: 28px;
  flex: none;
  padding: 3px;
  background-color: #f7f7f7;
}

.props-tabs button {
  height: 22px;
  padding: 0 7px;
  color: #666;
}

.props-tabs .on {
  border: 1px solid #ccc;
  background-color: #fff;
  color: #000;
  font-weight: bold;
}

/* package view */
.canvas {
  display: flex;
  align-items: center;
  justify-content: center;
  flex: 1;
  min-height: 0;
  background-color: #000;
}

.canvas svg {
  width: 224px;
  height: 224px;
}

/* io ports table */
.grid {
  display: flex;
  background-color: #fff;
}

.ports {
  flex: 1;
  width: 100%;
  border-spacing: 0;
  table-layout: fixed;
}

.w-name { width: 241px; }
.w-wide { width: 142px; }
.w-neg { width: 87px; }
.w-fixed { width: 47px; }
.w-bank { width: 46px; }
.w-std { width: 112px; }
.w-vcco { width: 50px; }
.w-vref { width: 39px; }
.w-term { width: 70px; }

.ports th {
  height: 24px;
  padding: 0 0 0 7px;
  border-right: 1px solid #d8d8d8;
  background-color: var(--bar);
  font-weight: normal;
  text-align: left;
  white-space: nowrap;
}

.ports td {
  height: 25px;
  padding: 0 0 0 7px;
  border-right: 1px solid var(--line);
  border-bottom: 1px solid var(--line);
  white-space: nowrap;
  overflow: hidden;
}

.ports th:last-child, .ports td.rest {
  border: none;
}

.ports td.num {
  padding: 0 8px 0 0;
  text-align: right;
}

.ports td.tick {
  padding: 0;
  text-align: center;
}

.ports .selected td:not(.rest) {
  background-color: var(--select);
}

.ports .lead td:first-child {
  outline: 1px solid #3c8fd0;
  outline-offset: -1px;
}

.ports select {
  display: block;
  width: 100%;
  height: 18px;
}

.ports select.std {
  background-image: url("data:image/svg+xml,%3Csvg xmlns='http://www.w3.org/2000/svg' width='7' height='5'%3E%3Cpath d='M0 1h7L3.500 4.500z' fill='%23444'/%3E%3C/svg%3E");
  background-position: right 10px center;
}

.ports input {
  appearance: none;
  display: block;
  width: 14px;
  height: 14px;
  margin: 0 auto;
  border: 1px solid #888;
  border-radius: 3px;
  background: #fff url("data:image/svg+xml,%3Csvg xmlns='http://www.w3.org/2000/svg' width='12' height='12'%3E%3Cpath d='M2.500 6l2.500 3 5-6' fill='none' stroke='%23444' stroke-width='2.200'/%3E%3C/svg%3E") center no-repeat;
}

.node {
  display: flex;
  align-items: center;
}

.node svg {
  width: 13px;
  height: 13px;
  margin-right: 6px;
}

.node .toggle {
  width: 10px;
  height: 10px;
  margin: 0 7px 0 14px;
  color: #777;
}

.node .toggle.none {
  visibility: hidden;
}

.level-1 { padding-left: 16px; }
.level-2 { padding-left: 32px; }

.node .count {
  margin-left: 4px;
  color: #888;
}

.selected .count {
  color: #000;
}

.grid-scroll {
  display: flex;
  flex-direction: column;
  align-items: center;
  gap: 26px;
  width: 14px;
  margin-top: 24px;
  padding: 4px 0;
  border-left: 1px solid #ddd;
  background-color: #fafafa;
  color: #777;
}

.grid-scroll .thumb {
  flex: 1;
  width: 8px;
  border-radius: 4px;
  background-color: #c1c1c1;
}

.statusbar {
  height: 3px;
  flex: none;
  background-color: #eee;
}

/* floating download widget */
.download {
  position: absolute;
  top: 112px;
  right: 155px;
  display: flex;
  width: 130px;
  height: 38px;
  border: 1px solid #0a96fa;
  border-radius: 7px;
  background: linear-gradient(90deg, #d0eaff 79%, #f0f9ff 79%);
}

.download-icon {
  display: flex;
  align-items: center;
  justify-content: center;
  width: 36px;
  border-radius: 6px;
  background: linear-gradient(45deg, #30b0ff, #0090ff 60%);
}

.download-icon svg {
  width: 17px;
  height: 20px;
}

.download-text {
  flex: 1;
  color: #1a9dff;
  line-height: 38px;
  text-align: center;
}

.badge {
  position: absolute;
  top: -10px;
  right: -6px;
  width: 20px;
  height: 20px;
  border-radius: 50%;
  background-color: #08a0ff;
  color: #fff;
  line-height: 20px;
  text-align: center;
}
```
FILE: script.js
```js
// level, state, icon, name, count, direction, neg pair, pin, bank, io std
// drive, slew, pull, off-chip
const ports = [
  [0, 'down', 'folder-port', 'diff_clock_rtl_0_54576', 2, 'IN', '', '', 216],
  [1, 'down', 'bus-in', 'diff_clock_rtl_0_clk_p', 2, 'IN', 'diff_clock_r...', '', 216],
  [2, '', 'port-in', 'diff_clock_rtl_0_clk_p[0]', null, 'IN', 'diff_clock_r...', 'F10', 216],
  [1, '', 'folder', 'Scalar ports', 0],
  [0, 'down', 'folder-port', 'gpio_rtl_0_54576', 2, 'OUT', '', '', 35, 'LVCMOS33*', '12', 'SLOW', 'NONE', 'FP_VTT_50'],
  [1, 'down', 'bus-out', 'gpio_rtl_0_tri_o', 2, 'OUT', '', '', 35, 'LVCMOS33*', '12', 'SLOW', 'NONE', 'FP_VTT_50'],
  [2, '', 'port-out', 'gpio_rtl_0_tri_o[1]', null, 'OUT', '', 'M3', 35, 'LVCMOS33*', '12', 'SLOW', 'NONE', 'FP_VTT_50'],
  [2, '', 'port-out', 'gpio_rtl_0_tri_o[0]', null, 'OUT', '', 'J1', 35, 'LVCMOS33*', '12', 'SLOW', 'NONE', 'FP_VTT_50'],
  [1, '', 'folder', 'Scalar ports', 0],
  [0, 'down', 'folder-port', 'pcie_7x_mgt_rtl_0_54576', 4, '(Multiple)', '', '', 216],
  [1, 'right', 'bus-in', 'pcie_7x_mgt_rtl_0_rxn', 1, 'IN', '', '', 216],
  [1, 'right', 'bus-in', 'pcie_7x_mgt_rtl_0_rxp', 1, 'IN', '', '', 216],
  [1, 'right', 'bus-out', 'pcie_7x_mgt_rtl_0_txn', 1, 'OUT', '', '', 216],
  [1, 'right', 'bus-out', 'pcie_7x_mgt_rtl_0_txp', 1, 'OUT', '', '', 216],
  [1, '', 'folder', 'Scalar ports', 0],
  [0, 'down', 'folder-port', 'RST.RESET_RTL_0_54576', 1, 'IN', '', '', 35, 'LVCMOS33*', '', '', 'NONE', 'NONE'],
  [1, 'down', 'folder-check', 'Scalar ports', 1],
  [2, '', 'port-in', 'reset_rtl_0', null, 'IN', '', 'G3', 35, 'LVCMOS33*', '', '', 'NONE', 'NONE']
];

function pick(value, label, cls = '') {
  return value ? `<select class="${cls}" aria-label="${label}"><option>${value}</option></select>` : '';
}

function portRow(port, index) {
  const [level, state, icon, name, count, dir, neg, pin, bank, std, drive, slew, pull, off] = port;
  const node = `
    <div class="node level-${level}">
      <svg class="toggle ${state ? '' : 'none'}"><use href="#${state || 'down'}"/></svg>
      <svg><use href="#${icon}"/></svg>${name}
      ${count === null ? '' : `<span class="count">(${count})</span>`}
    </div>`;
  if (!dir) return `<tr><td colspan="14">${node}</td><td class="rest"></td></tr>`;

  const cls = (index < 3 ? 'selected' : '') + (index === 0 ? ' lead' : '');
  return `
    <tr class="${cls}">
      <td>${node}</td>
      <td>${dir}</td>
      <td>${neg}</td>
      <td>${pick(pin, 'Package Pin')}</td>
      <td class="tick"><input type="checkbox" checked aria-label="Fixed ${name}"></td>
      <td class="num">${bank}</td>
      <td>${pick(std, 'I/O Std', 'std')}</td>
      <td class="num">${std ? '3.300' : ''}</td>
      <td></td>
      <td>${pick(drive, 'Drive Strength')}</td>
      <td>${pick(slew, 'Slew Type')}</td>
      <td>${pick(pull, 'Pull Type')}</td>
      <td>${pick(off, 'Off-Chip Termination')}</td>
      <td></td>
      <td class="rest"></td>
    </tr>`;
}

document.getElementById('ports').innerHTML = ports.map(portRow).join('');

// one letter per ball: o io, h clock capable, g ground, r power, b vref,
// t/n/k/w bank 16, C/S/O config, x no connect, y special, H/P/p marked io
const balls = [
  'oggngtgngtggooooroooog',
  'oognrtrnrtrgoroohhgooo',
  'rogrtgtrtgtgoooghhhbro',
  'ooggtrtgtrtggobohrhooo',
  'oobggtgrgwgCoorooohgoo',
  'oroogtgkrwgroooogoooor',
  'ooHhggggggCgogooooroo​o',
  'gohhorgrgrgrooorobhogo',
  'porhoorgrgrgrooooghhho',
  'oohhgorgSSgrobgoohhroo',
  'oghooorgSSrCoooorohhog',
  'ooProogrSSgroroooogooo',
  'roboogrgOOrCooogooooro',
  'oogooogrgrgrgooooroooo',
  'ooohrorgrgrgCbroooogoo',
  'orohhogrgrgrCxxxgoobor',
  'oooghooCCCCCCgxxoorhoo',
  'gobhoroooxgCxxxyohhhgo',
  'oorhoobgoxxxyxxxoghhoo',
  'ooohgooooyxxxxgxxhhroo',
  'ogohooroxxxgxxxxyoooog',
  'ooorooooGxxxxyxxxogooo'
];

const regions = [
  ['#9c5d80', '#3c2832', '68,42 117,42 117,131 147,131 147,161 177,161 177,223 208,223 208,253 239,253 239,458 87,458 87,488 68,488'],
  ['#1010b8', '#0a0a40', '428,42 725,42 725,245 671,245 671,215 428,215'],
  ['#118fae', '#083c40', '428,223 662,223 662,253 725,253 725,425 579,425 579,395 490,395 490,365 450,365 450,395 428,395'],
  ['#4a2fb0', '#1c1848', '428,403 457,403 457,373 482,373 482,403 573,403 573,433 725,433 725,702 582,702 582,607 550,607 550,488 457,488 457,458 428,458'],
  ['#d60fa8', '#48083c', '68,495 95,495 95,466 239,466 239,496 269,496 269,556 329,556 329,637 299,637 299,702 68,702'],
  ['#588a10', '#1a2800', '155,42 359,42 359,101 389,101 389,188 359,188 359,215 336,215 336,188 303,188 303,215 273,215 273,188 243,188 243,215 214,215 214,188 184,188 184,93 155,93'],
  ['#588a10', '#000', '208,124 249,124 249,161 208,161'],
  ['#588a10', '#000', '328,124 370,124 370,161 328,161'],
  ['#588a10', '#000', '181,64 213,64 213,97 181,97'],
  ['#588a10', '#000', '242,64 273,64 273,97 242,97'],
  ['#588a10', '#000', '303,64 333,64 333,97 303,97'],
  ['#588a10', '#000', '272,130 304,130 304,154 272,154'],
  ['#d45f98', '#401c28', '306,313 360,313 360,426 306,426'],
  ['#d45f98', '#401c28', '367,245 367,193 397,193 397,158 422,158 422,245'],
  ['#d45f98', '#401c28', '396,343 422,343 422,367 396,367'],
  ['#d45f98', '#401c28', '396,403 422,403 422,427 396,427'],
  ['#d45f98', '#401c28', '397,466 450,466 450,550 422,550 422,580 367,580 367,550 272,550 272,526 367,526 367,495 397,495']
];

function ball(kind, x, y) {
  const rect = (w, h, fill) => `<rect x="${x - w / 2}" y="${y - h / 2}" width="${w}" height="${h}" fill="${fill}"/>`;
  const circle = `<circle cx="${x}" cy="${y}" r="12" fill="#828282"/>`;
  const hex = `<path d="M${x - 14} ${y}l7-12h14l7 12-7 12h-14z" fill="#a9d2ff"/>`;
  const plus = color => `<path d="M${x - 8} ${y}h16M${x - 2} ${y - 8}v16M${x + 3} ${y - 5}v10" stroke="${color}" stroke-width="3" fill="none"/>`;
  switch (kind) {
    case 'o': return circle;
    case 'h': return hex;
    case 'H': return hex + rect(22, 8, '#e58a45');
    case 'P': return circle + rect(20, 8, '#e58a45');
    case 'p': return circle + rect(16, 10, '#e58a45');
    case 'g':
    case 'G': return rect(27, 27, '#000') + `<path d="M${x} ${y - 8}v14M${x - 7} ${y}h14M${x - 4} ${y + 4}h8" stroke="#2c6420" stroke-width="3" fill="none"/>`;
    case 'r': return plus('#b03440');
    case 'b': return plus('#2a38f0');
    case 't': return rect(18, 26, '#a48c60');
    case 'n': return rect(18, 26, '#a48c60') + rect(16, 12, '#e57a25');
    case 'k': return rect(18, 18, '#8c7a50') + rect(6, 8, '#222');
    case 'w': return rect(24, 20, '#fff');
    case 'C': return `<path d="M${x + 6} ${y - 6}h-9v12h9" stroke="#d85410" stroke-width="3.500" fill="none"/>`;
    case 'S': return `<path d="M${x + 6} ${y - 7}h-10v7h9v7h-10" stroke="#f07010" stroke-width="4" fill="none"/>`;
    case 'O': return rect(20, 16, '#ff6a00');
    case 'x': return rect(26, 26, '#5a5a5a') + `<path d="M${x - 8} ${y - 8}l16 16M${x + 8} ${y - 8}l-16 16" stroke="#484848" stroke-width="2"/>`;
    case 'y': return rect(30, 30, '#a8aa20') + rect(15, 15, '#50401c') + rect(8, 8, '#c83828');
  }
  return '';
}

function drawPackage() {
  const pitch = 30.3;
  let out = '<rect x="60" y="36" width="672" height="672" fill="#000"/>';
  // unconnected area at the bottom
  out += '<path fill="#303030" d="M333 552h33v30h60v-30h30v-60h92v118h32v92H303v-62h30z"/>';
  for (const [, fill, points] of regions) {
    out += `<polygon points="${points}" fill="${fill}"/>`;
  }
  for (let i = 1; i < 22; i++) {
    const p = i * pitch;
    out += `<path d="M${61 + p} 38v668M62 ${36 + p}h668" stroke="#808080" stroke-opacity=".35" stroke-width="2.500"/>`;
  }
  balls.forEach((row, y) => {
    [...row.replace(/[^a-zA-Z]/g, '')].forEach((kind, x) => {
      out += ball(kind, 76 + x * pitch, 51 + y * pitch);
    });
  });
  for (const [stroke, , points] of regions) {
    out += `<polygon points="${points}" fill="none" stroke="${stroke}" stroke-width="8"/>`;
  }
  out += '<rect x="61.5" y="37.5" width="669" height="669" fill="none" stroke="#fff" stroke-width="3"/>';
  document.getElementById('package').innerHTML = out;
}

drawPackage();
```
